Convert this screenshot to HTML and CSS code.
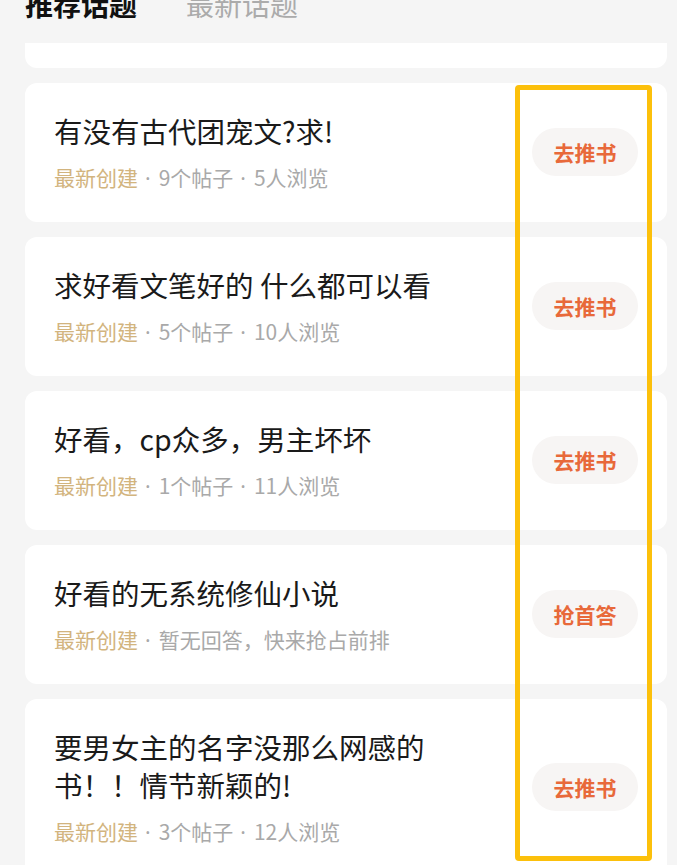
FILE: index.html
```html
<!DOCTYPE html>
<html lang="zh-CN">
<head>
<meta charset="utf-8">
<title>推荐话题</title>
<link rel="stylesheet" href="styles.css">
</head>
<body>
<div class="page">
  <div class="tabs">
    <span class="tab active">推荐话题</span>
    <span class="tab">最新话题</span>
  </div>
  <div class="list">
    <div class="card card-cut"></div>
    <div class="card">
      <div class="info">
        <div class="title">有没有古代团宠文?求!</div>
        <div class="meta"><span class="tag">最新创建</span><span class="dot">·</span>9个帖子<span class="dot">·</span>5人浏览</div>
      </div>
      <div class="btn">去推书</div>
    </div>
    <div class="card">
      <div class="info">
        <div class="title">求好看文笔好的 什么都可以看</div>
        <div class="meta"><span class="tag">最新创建</span><span class="dot">·</span>5个帖子<span class="dot">·</span>10人浏览</div>
      </div>
      <div class="btn">去推书</div>
    </div>
    <div class="card">
      <div class="info">
        <div class="title">好看，cp众多，男主坏坏</div>
        <div class="meta"><span class="tag">最新创建</span><span class="dot">·</span>1个帖子<span class="dot">·</span>11人浏览</div>
      </div>
      <div class="btn">去推书</div>
    </div>
    <div class="card">
      <div class="info">
        <div class="title">好看的无系统修仙小说</div>
        <div class="meta"><span class="tag">最新创建</span><span class="dot">·</span>暂无回答，快来抢占前排</div>
      </div>
      <div class="btn">抢首答</div>
    </div>
    <div class="card">
      <div class="info">
        <div class="title">要男女主的名字没那么网感的书！！情节新颖的!</div>
        <div class="meta"><span class="tag">最新创建</span><span class="dot">·</span>3个帖子<span class="dot">·</span>12人浏览</div>
      </div>
      <div class="btn">去推书</div>
    </div>
  </div>
  <div class="highlight"></div>
</div>
</body>
</html>
```

FILE: styles.css
```css
html, body {
  margin: 0;
  padding: 0;
}
body {
  background: #f5f5f5;
  font-family: "Noto Sans CJK SC", "Noto Sans", sans-serif;
  overflow: hidden;
  height: 865px;
}
.page {
  position: relative;
  height: 865px;
  overflow: hidden;
}
.tabs {
  display: flex;
  gap: 49px;
  padding-left: 25px;
  margin-top: -10px;
  height: 28px;
  margin-bottom: 25px;
}
.tab {
  font-size: 28px;
  line-height: 28px;
  color: #ababab;
}
.tab.active {
  color: #111;
  font-weight: 700;
}
.list {
  display: flex;
  flex-direction: column;
  gap: 15px;
  padding: 0 10px 0 25px;
}
.card {
  background: #fff;
  border-radius: 12px;
  display: flex;
  align-items: center;
  padding: 29px 29px 30px 29px;
}
.card-cut {
  height: 25px;
  padding: 0;
  border-radius: 0 0 12px 12px;
}
.info {
  flex: 1;
  min-width: 0;
  margin-right: 93px;
}
.title {
  font-size: 28.5px;
  line-height: 38px;
  height: auto;
  color: #1a1a1a;
}
.meta {
  margin-top: 12px;
  font-size: 21px;
  line-height: 30px;
  height: 30px;
  color: #a9a9a9;
  white-space: nowrap;
}
.tag {
  color: #d2b47e;
}
.dot {
  font-family: "Noto Sans", sans-serif;
  line-height: 0;
  padding: 0 8px 0 7px;
}
.btn {
  flex: none;
  width: 106px;
  height: 48px;
  border-radius: 24px;
  background: #f7f5f4;
  color: #e8693a;
  font-size: 21px;
  font-weight: 700;
  display: flex;
  align-items: center;
  justify-content: center;
}
.highlight {
  position: absolute;
  left: 515px;
  top: 85px;
  width: 127px;
  height: 766px;
  border: 5px solid #fcc00b;
  border-radius: 4px;
}
```
